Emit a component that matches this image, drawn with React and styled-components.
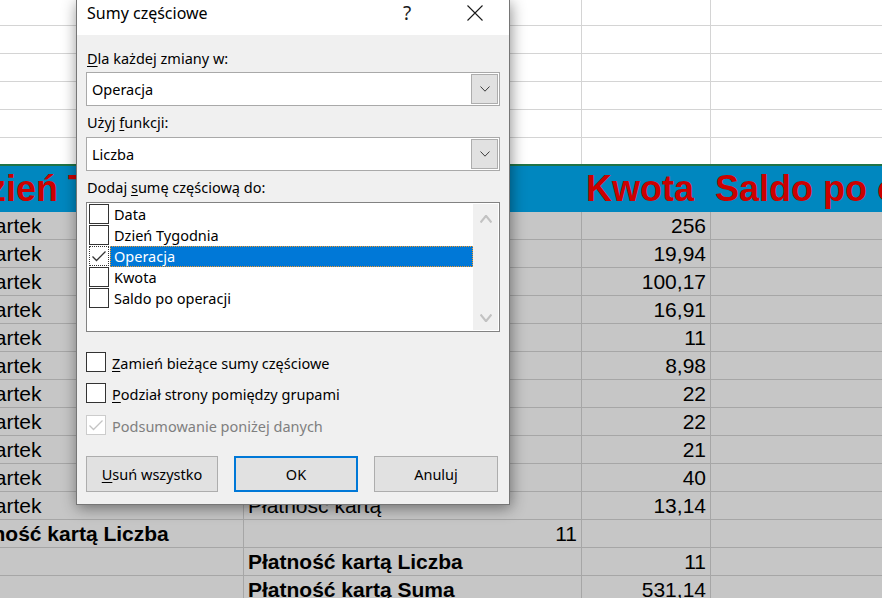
import React from "react";
import styled, { createGlobalStyle } from "styled-components";

const GlobalStyle = createGlobalStyle`
  html, body {
    margin: 0;
    padding: 0;
    background: #ffffff;
    overflow: hidden;
  }
`;

const Screen = styled.div`
  position: relative;
  width: 882px;
  height: 598px;
  overflow: hidden;
  font-family: "Liberation Sans", Arial, sans-serif;
`;

/* ---------- spreadsheet behind the dialog ---------- */

const Sheet = styled.div`
  display: flex;
  flex-direction: column;
  width: 932px;
  margin-left: -50px; /* sheet is scrolled: column B starts off screen */
  margin-top: -2px;
`;

const Row = styled.div`
  display: grid;
  grid-template-columns: 294px 338px 129px 171px;
  height: ${(p) => p.$h}px;
  box-sizing: border-box;
  background: ${(p) => p.$bg};
  border-bottom: ${(p) => (p.$line ? `1px solid ${p.$line}` : "none")};
  border-top: ${(p) => (p.$topLine ? `2px solid ${p.$topLine}` : "none")};
`;

const Cell = styled.div`
  box-sizing: border-box;
  border-right: ${(p) => (p.$line ? `1px solid ${p.$line}` : "none")};
  padding: 0 4px;
  font-size: 21px;
  line-height: 27px;
  font-weight: ${(p) => (p.$bold ? 700 : 400)};
  text-align: ${(p) => (p.$right ? "right" : "left")};
  color: #000;
  white-space: nowrap;
  overflow: hidden;
`;

const HeadCell = styled.div`
  padding-left: ${(p) => p.$pad || 4}px;
  font-size: 36px;
  line-height: 45px;
  font-weight: 700;
  color: #cc0000;
  white-space: nowrap;
`;

/* ---------- dialog ---------- */

const Dialog = styled.div`
  position: absolute;
  left: 76px;
  top: 0;
  width: 432px;
  border: 1px solid #767676;
  border-top: none;
  background: #f0f0f0;
  box-shadow: 1px 3px 14px rgba(0, 0, 0, 0.45);
  font-family: "Noto Sans", "Segoe UI", sans-serif;
  font-size: 14.5px;
  color: #000;
`;

const TitleBar = styled.div`
  display: flex;
  align-items: flex-start;
  height: 35px;
  background: #ffffff;
`;

const Title = styled.div`
  flex: 1;
  padding: 2px 0 0 10px;
  font-size: 16px;
  line-height: 22px;
  color: #000;
`;

const CaptionButton = styled.div`
  width: 68px;
  height: 35px;
  display: flex;
  justify-content: center;
  padding-top: ${(p) => p.$pt}px;
  box-sizing: border-box;
  font-size: 19px;
  line-height: 20px;
  color: #1a1a1a;
`;

const Body = styled.div`
  display: flex;
  flex-direction: column;
  padding: 13px 9px 12px 9px;
`;

const Label = styled.div`
  line-height: 20px;
  margin-top: ${(p) => p.$mt || 0}px;
  padding-left: 1px;
`;

const Key = styled.span`
  text-decoration: underline;
  text-underline-offset: 2px;
`;

const Combo = styled.div`
  display: flex;
  align-items: center;
  height: 34px;
  margin-top: ${(p) => p.$mt}px;
  box-sizing: border-box;
  border: 1px solid #a9a9a9;
  background: #ffffff;
  padding: 0 1px 0 5px;
`;

const ComboText = styled.div`
  flex: 1;
  line-height: 20px;
`;

const DropButton = styled.div`
  width: 27px;
  height: 30px;
  box-sizing: border-box;
  border: 1px solid #adadad;
  background: #e1e1e1;
  display: flex;
  align-items: center;
  justify-content: center;
`;

const ListBox = styled.div`
  display: flex;
  height: 130px;
  margin-top: 5px;
  box-sizing: border-box;
  border: 1px solid #828282;
  background: #ffffff;
  padding: 1px;
`;

const Items = styled.div`
  flex: 1;
  display: flex;
  flex-direction: column;
`;

const Item = styled.div`
  display: flex;
  align-items: flex-start;
  height: 21px;
`;

const Box = styled.div`
  width: 20px;
  height: 20px;
  flex-shrink: 0;
  box-sizing: border-box;
  border: 1px ${(p) => (p.$focus ? "dotted" : "solid")} ${(p) => p.$color || "#333333"};
  background: #ffffff;
  margin-left: ${(p) => p.$ml || 0}px;
  display: flex;
  align-items: center;
  justify-content: center;
`;

const ItemLabel = styled.div`
  flex: 1;
  margin-left: 1px;
  height: 21px;
  box-sizing: border-box;
  padding-left: 3px;
  line-height: 19px;
  border: 1px dotted ${(p) => (p.$selected ? "#f29a2e" : "transparent")};
  background: ${(p) => (p.$selected ? "#0078d7" : "transparent")};
  color: ${(p) => (p.$selected ? "#ffffff" : "#000000")};
`;

const ScrollBar = styled.div`
  width: 25px;
  display: flex;
  flex-direction: column;
  align-items: center;
  justify-content: space-between;
  padding: 11px 0 8px;
  box-sizing: border-box;
  background: #f0f0f0;
`;

const CheckRow = styled.div`
  display: flex;
  align-items: flex-start;
  height: 20px;
  margin-top: ${(p) => p.$mt}px;
  color: ${(p) => (p.$disabled ? "#7f7f7f" : "#000")};
`;

const CheckText = styled.div`
  margin-left: 6px;
  padding-top: 1px;
  line-height: 20px;
`;

const Buttons = styled.div`
  display: flex;
  gap: 16px;
  margin-top: 21px;
`;

const Button = styled.div`
  width: ${(p) => p.$w}px;
  height: 36px;
  box-sizing: border-box;
  border: ${(p) => (p.$default ? "2px solid #0078d7" : "1px solid #adadad")};
  background: #e1e1e1;
  display: flex;
  align-items: center;
  justify-content: center;
  line-height: 20px;
`;

/* ---------- drawings ---------- */

const Chevron = ({ up, color, w = 10, h = 6, stroke = 1 }) => (
  <svg width={w} height={h} viewBox={`0 0 ${w} ${h}`}>
    <polyline
      points={
        up
          ? `0.5,${h - 0.5} ${w / 2},0.8 ${w - 0.5},${h - 0.5}`
          : `0.5,0.5 ${w / 2},${h - 0.8} ${w - 0.5},0.5`
      }
      fill="none"
      stroke={color}
      strokeWidth={stroke}
    />
  </svg>
);

const CheckMark = ({ color }) => (
  <svg width="18" height="18" viewBox="0 0 18 18">
    <polyline
      points="2.5,9.5 6.5,13.5 15.5,4.5"
      fill="none"
      stroke={color}
      strokeWidth="1.3"
    />
  </svg>
);

const CloseIcon = () => (
  <svg width="16" height="16" viewBox="0 0 16 16">
    <path d="M0.5 0.5 L15.5 15.5 M15.5 0.5 L0.5 15.5" stroke="#1a1a1a" strokeWidth="1.1" />
  </svg>
);

/* ---------- data ---------- */

const kwoty = ["256", "19,94", "100,17", "16,91", "11", "8,98", "22", "22", "21", "40", "13,14"];

const fields = ["Data", "Dzień Tygodnia", "Operacja", "Kwota", "Saldo po operacji"];

const WHITE_LINE = "#d4d4d4";
const GRAY_LINE = "#a6a6a6";

export default function App() {
  return (
    <Screen>
      <GlobalStyle />
      <Sheet>
        {[0, 1, 2, 3, 4, 5].map((i) => (
          <Row key={i} $h={i === 5 ? 26 : 28} $bg="#ffffff" $line={i === 5 ? null : WHITE_LINE}>
            <Cell $line={WHITE_LINE} />
            <Cell $line={WHITE_LINE} />
            <Cell $line={WHITE_LINE} />
            <Cell />
          </Row>
        ))}
        <Row $h={48} $bg="#0087bf" $topLine="#217346">
          <HeadCell $pad={12}>Dzień Tygodnia</HeadCell>
          <HeadCell>Operacja</HeadCell>
          <HeadCell>Kwota</HeadCell>
          <HeadCell>Saldo po operacji</HeadCell>
        </Row>
        {kwoty.map((k, i) => (
          <Row key={i} $h={28} $bg="#c6c6c6" $line={GRAY_LINE}>
            <Cell $line={GRAY_LINE}>Czwartek</Cell>
            <Cell $line={GRAY_LINE}>Płatność kartą</Cell>
            <Cell $line={GRAY_LINE} $right>{k}</Cell>
            <Cell />
          </Row>
        ))}
        <Row $h={28} $bg="#c6c6c6" $line={GRAY_LINE}>
          <Cell $line={GRAY_LINE} $bold>Płatność kartą Liczba</Cell>
          <Cell $line={GRAY_LINE} $right>11</Cell>
          <Cell $line={GRAY_LINE} />
          <Cell />
        </Row>
        <Row $h={28} $bg="#c6c6c6" $line={GRAY_LINE}>
          <Cell $line={GRAY_LINE} />
          <Cell $line={GRAY_LINE} $bold>Płatność kartą Liczba</Cell>
          <Cell $line={GRAY_LINE} $right>11</Cell>
          <Cell />
        </Row>
        <Row $h={28} $bg="#c6c6c6" $line={GRAY_LINE}>
          <Cell $line={GRAY_LINE} />
          <Cell $line={GRAY_LINE} $bold>Płatność kartą Suma</Cell>
          <Cell $line={GRAY_LINE} $right>531,14</Cell>
          <Cell />
        </Row>
      </Sheet>

      <Dialog>
        <TitleBar>
          <Title>Sumy częściowe</Title>
          <CaptionButton $pt={3}>?</CaptionButton>
          <CaptionButton $pt={5}>
            <CloseIcon />
          </CaptionButton>
        </TitleBar>
        <Body>
          <Label>
            <Key>D</Key>la każdej zmiany w:
          </Label>
          <Combo $mt={4}>
            <ComboText>Operacja</ComboText>
            <DropButton>
              <Chevron color="#3c3c3c" w={10} h={6} />
            </DropButton>
          </Combo>
          <Label $mt={6}>
            Użyj <Key>f</Key>unkcji:
          </Label>
          <Combo $mt={5}>
            <ComboText>Liczba</ComboText>
            <DropButton>
              <Chevron color="#3c3c3c" w={10} h={6} />
            </DropButton>
          </Combo>
          <Label $mt={6}>
            Dodaj <Key>s</Key>umę częściową do:
          </Label>
          <ListBox>
            <Items>
              {fields.map((f) => {
                const selected = f === "Operacja";
                return (
                  <Item key={f}>
                    <Box $ml={1} $focus={selected}>
                      {selected && <CheckMark color="#333333" />}
                    </Box>
                    <ItemLabel $selected={selected}>{f}</ItemLabel>
                  </Item>
                );
              })}
            </Items>
            <ScrollBar>
              <Chevron up color="#c2c2c2" w={12} h={8} stroke={2.2} />
              <Chevron color="#c2c2c2" w={12} h={8} stroke={2.2} />
            </ScrollBar>
          </ListBox>
          <CheckRow $mt={20}>
            <Box />
            <CheckText>
              <Key>Z</Key>amień bieżące sumy częściowe
            </CheckText>
          </CheckRow>
          <CheckRow $mt={11}>
            <Box />
            <CheckText>
              <Key>P</Key>odział strony pomiędzy grupami
            </CheckText>
          </CheckRow>
          <CheckRow $mt={12} $disabled>
            <Box $color="#cccccc">
              <CheckMark color="#c4c4c4" />
            </Box>
            <CheckText>Podsumowanie poniżej danych</CheckText>
          </CheckRow>
          <Buttons>
            <Button $w={132}>
              <span>
                <Key>U</Key>suń wszystko
              </span>
            </Button>
            <Button $w={124} $default>
              OK
            </Button>
            <Button $w={124}>Anuluj</Button>
          </Buttons>
        </Body>
      </Dialog>
    </Screen>
  );
}
